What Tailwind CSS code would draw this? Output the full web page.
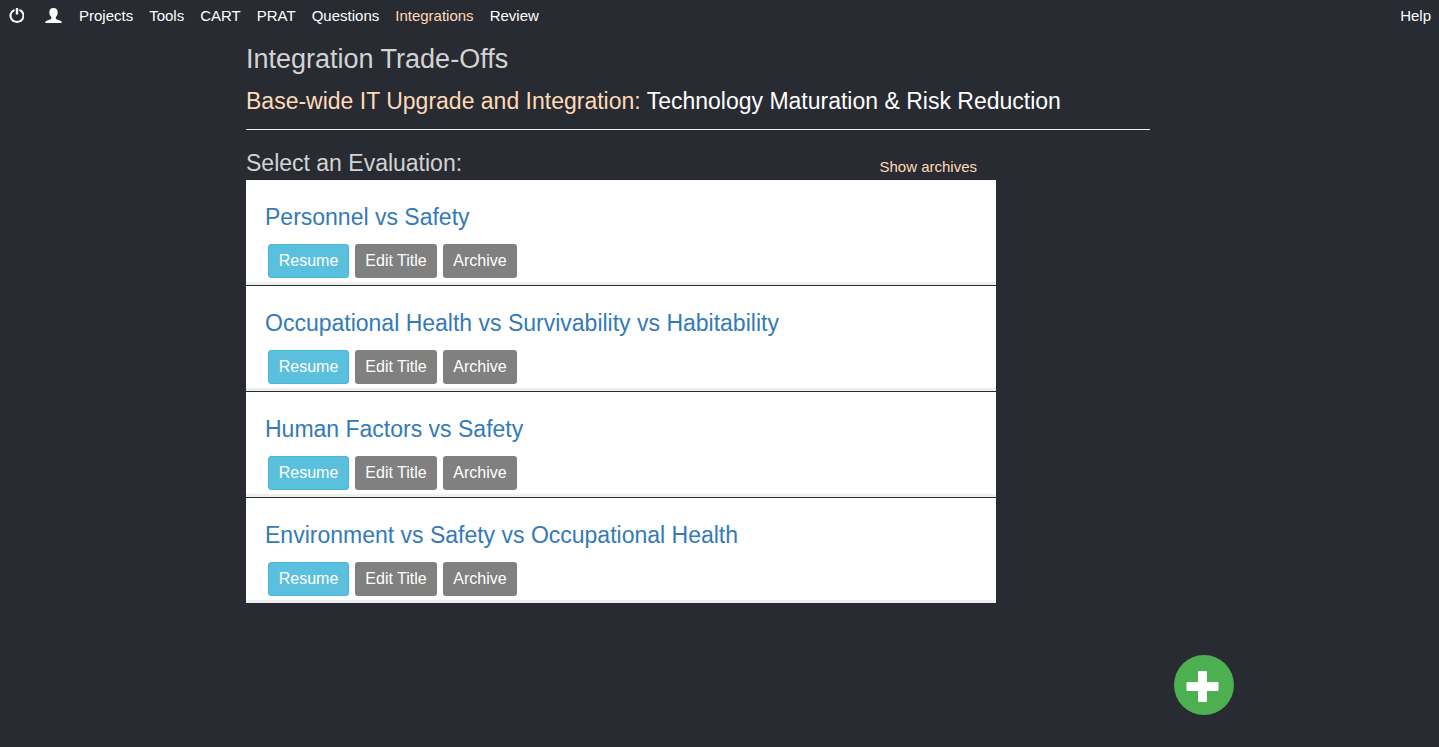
<!DOCTYPE html>
<html lang="en">
<head>
<meta charset="utf-8">
<meta name="viewport" content="width=device-width, initial-scale=1">
<title>Integration Trade-Offs</title>
<script src="https://cdn.jsdelivr.net/npm/@tailwindcss/browser@4"></script>
</head>
<body class="min-h-screen bg-[#282b32] font-['Liberation_Sans',Arial,sans-serif] text-white">
<nav class="flex h-8 items-center px-2 text-[15px] leading-5">
  <a href="#" aria-label="Log out" class="mr-5"><svg class="size-4" viewBox="0 0 16 16" fill="none" stroke="currentColor" stroke-width="2.100"><path d="M6.500 1.900a6.500 6.300 0 1 0 5 0" /><path d="M9 0v6.500" stroke-width="2.400"/></svg></a>
  <a href="#" aria-label="Account" class="mr-[17px]"><svg class="h-4 w-[18px]" viewBox="0 0 18 16" fill="currentColor"><path d="M9.500 0c3 0 4.200 1.800 4.200 4.400 0 2.100-.9 3.700-1.900 4.700v1c0 .8.5 1.100 1.200 1.400l3.400 1.200c.8.300 1.200.8 1.200 1.400v.9H1.400v-.9c0-.6.4-1.100 1.200-1.400l3.400-1.200c.8-.3 1.300-.6 1.300-1.400v-1c-1-1-2-2.600-2-4.700C5.300 1.800 6.500 0 9.500 0z"/></svg></a>
  <div class="flex grow gap-4">
    <a href="#">Projects</a>
    <a href="#">Tools</a>
    <a href="#">CART</a>
    <a href="#">PRAT</a>
    <a href="#">Questions</a>
    <a href="#" class="text-[#ffdab9]" aria-current="page">Integrations</a>
    <a href="#">Review</a>
  </div>
  <a href="#">Help</a>
</nav>
<main class="ml-[246px] mr-4 max-w-[904px]">
  <h1 class="pt-[11px] text-[27px] leading-8 text-[#d3d3d3]">Integration Trade-Offs</h1>
  <h2 class="mt-[13px] border-b border-[#eeeeee] pb-[15px] text-[23px] leading-[26px]"><span class="text-[#ffdab9]">Base-wide IT Upgrade and Integration:</span> Technology Maturation &amp; Risk Reduction</h2>
  <section class="max-w-[750px]">
    <div class="flex items-end justify-between pt-5 pr-[19px]">
      <h2 class="pb-1 text-[23px] leading-[26px] text-[#d3d3d3]">Select an Evaluation:</h2>
      <a href="#" class="pb-[3px] text-[15px] leading-5 text-[#ffdab9]">Show archives</a>
    </div>
    <ul class="flex flex-col gap-px text-[16px]">
      <li class="border-b-3 border-[#eeeeee] bg-white px-[19px] pt-6 pb-1">
        <h3 class="text-[23px] leading-[26px]"><a href="#" class="text-[#337ab7]">Personnel vs Safety</a></h3>
        <div class="ml-[3px] mt-[14px] flex gap-1.5"><button type="button" class="h-[34px] w-[81px] rounded-[3px] border border-[#46b8da] bg-[#5bc0de]">Resume</button><button type="button" class="h-[34px] w-[82px] rounded-[3px] bg-[#808080]">Edit Title</button><button type="button" class="h-[34px] w-[74px] rounded-[3px] bg-[#808080]">Archive</button></div>
      </li>
      <li class="border-b-3 border-[#eeeeee] bg-white px-[19px] pt-6 pb-1">
        <h3 class="text-[23px] leading-[26px]"><a href="#" class="text-[#337ab7]">Occupational Health vs Survivability vs Habitability</a></h3>
        <div class="ml-[3px] mt-[14px] flex gap-1.5"><button type="button" class="h-[34px] w-[81px] rounded-[3px] border border-[#46b8da] bg-[#5bc0de]">Resume</button><button type="button" class="h-[34px] w-[82px] rounded-[3px] bg-[#808080]">Edit Title</button><button type="button" class="h-[34px] w-[74px] rounded-[3px] bg-[#808080]">Archive</button></div>
      </li>
      <li class="border-b-3 border-[#eeeeee] bg-white px-[19px] pt-6 pb-1">
        <h3 class="text-[23px] leading-[26px]"><a href="#" class="text-[#337ab7]">Human Factors vs Safety</a></h3>
        <div class="ml-[3px] mt-[14px] flex gap-1.5"><button type="button" class="h-[34px] w-[81px] rounded-[3px] border border-[#46b8da] bg-[#5bc0de]">Resume</button><button type="button" class="h-[34px] w-[82px] rounded-[3px] bg-[#808080]">Edit Title</button><button type="button" class="h-[34px] w-[74px] rounded-[3px] bg-[#808080]">Archive</button></div>
      </li>
      <li class="border-b-3 border-[#eeeeee] bg-white px-[19px] pt-6 pb-1">
        <h3 class="text-[23px] leading-[26px]"><a href="#" class="text-[#337ab7]">Environment vs Safety vs Occupational Health</a></h3>
        <div class="ml-[3px] mt-[14px] flex gap-1.5"><button type="button" class="h-[34px] w-[81px] rounded-[3px] border border-[#46b8da] bg-[#5bc0de]">Resume</button><button type="button" class="h-[34px] w-[82px] rounded-[3px] bg-[#808080]">Edit Title</button><button type="button" class="h-[34px] w-[74px] rounded-[3px] bg-[#808080]">Archive</button></div>
      </li>
    </ul>
  </section>
</main>
<button type="button" aria-label="Add evaluation" class="fixed right-[205px] bottom-8 size-[60px] rounded-full bg-[#4caf50]">
  <svg class="size-[60px]" viewBox="0 0 60 60" fill="currentColor"><rect x="24" y="16" width="9" height="31" rx="1"/><rect x="12.500" y="27" width="32" height="9" rx="1"/></svg>
</button>
</body>
</html>
